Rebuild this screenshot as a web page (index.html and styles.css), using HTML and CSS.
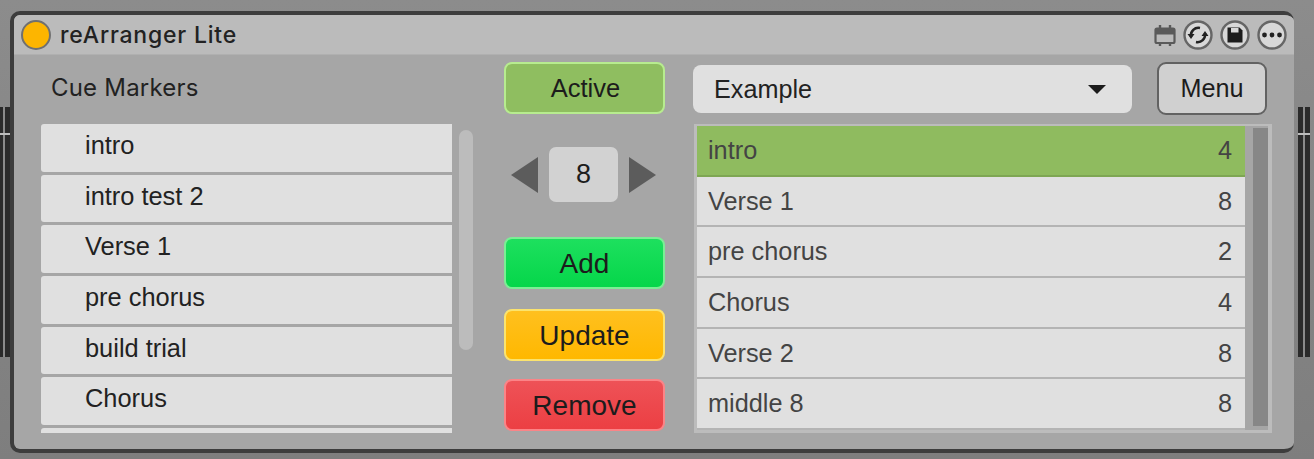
FILE: index.html
```html
<!doctype html>
<html lang="en">
  <head>
    <meta charset="UTF-8">
    <title>reArranger Lite</title>
    <link rel="stylesheet" href="styles.css">
  </head>
  <body>
    <div class="meter meter-left"></div>
    <div class="meter meter-right"></div>

    <div class="device">
      <div class="titlebar">
        <span class="led"></span>
        <span class="title">reArranger Lite</span>
        <div class="tools">
          <svg width="22" height="22" viewBox="0 0 22 22">
            <rect x="1.500" y="4.500" width="19" height="14.500" rx="1.500" fill="none" stroke="#5a5a5a" stroke-width="2.200"/>
            <rect x="1.500" y="4.500" width="19" height="6" fill="#5a5a5a"/>
            <path d="M6 1v4M16 1v4M6 18v4M16 18v4" stroke="#5a5a5a" stroke-width="2.400" fill="none"/>
          </svg>
          <svg width="30" height="30" viewBox="0 0 30 30">
            <circle cx="15" cy="15" r="13.500" fill="#d8d8d8" stroke="#666" stroke-width="2.400"/>
            <path d="M8 16.500a7.500 7.500 0 0 1 9-8.500" fill="none" stroke="#222" stroke-width="2.600"/>
            <path d="M22 13.500a7.500 7.500 0 0 1-9 8.500" fill="none" stroke="#222" stroke-width="2.600"/>
            <path d="M4.500 14h7l-3.500 5zM25.500 16h-7l3.500-5z" fill="#222"/>
          </svg>
          <svg width="30" height="30" viewBox="0 0 30 30">
            <circle cx="15" cy="15" r="13.500" fill="#d8d8d8" stroke="#666" stroke-width="2.400"/>
            <path d="M7.500 7.500h12l3 3v12h-15z" fill="#1c1c1c"/>
            <rect x="11" y="8" width="7.500" height="4.500" fill="#d8d8d8"/>
          </svg>
          <svg width="30" height="30" viewBox="0 0 30 30">
            <circle cx="15" cy="15" r="13.500" fill="#d8d8d8" stroke="#666" stroke-width="2.400"/>
            <circle cx="7.500" cy="15" r="2.400" fill="#222"/>
            <circle cx="15" cy="15" r="2.400" fill="#222"/>
            <circle cx="22.500" cy="15" r="2.400" fill="#222"/>
          </svg>
        </div>
      </div>

      <div class="content">
        <div class="cues">
          <h2 class="cues-title">Cue Markers</h2>
          <div class="cues-body">
            <ul class="cue-list">
              <li>intro</li>
              <li>intro test 2</li>
              <li>Verse 1</li>
              <li>pre chorus</li>
              <li>build trial</li>
              <li>Chorus</li>
              <li></li>
            </ul>
            <div class="cue-scroll"></div>
          </div>
        </div>

        <div class="controls">
          <button class="btn btn-active">Active</button>
          <div class="stepper">
            <span class="arrow arrow-left"></span>
            <span class="step-value">8</span>
            <span class="arrow arrow-right"></span>
          </div>
          <button class="btn btn-add">Add</button>
          <button class="btn btn-update">Update</button>
          <button class="btn btn-remove">Remove</button>
        </div>

        <div class="arrangement">
          <div class="arr-top">
            <div class="dropdown">
              <span>Example</span>
              <span class="caret"></span>
            </div>
            <button class="menu-btn">Menu</button>
          </div>
          <div class="arr-frame">
            <ul class="arr-list">
              <li class="selected"><span>intro</span><span>4</span></li>
              <li><span>Verse 1</span><span>8</span></li>
              <li><span>pre chorus</span><span>2</span></li>
              <li><span>Chorus</span><span>4</span></li>
              <li><span>Verse 2</span><span>8</span></li>
              <li><span>middle 8</span><span>8</span></li>
            </ul>
            <div class="arr-scroll"></div>
          </div>
        </div>
      </div>
    </div>
  </body>
</html>
```

FILE: styles.css
```css
* {
  box-sizing: border-box;
}

html, body {
  margin: 0;
  height: 459px;
  overflow: hidden;
}

body {
  position: relative;
  padding: 11px 20px 6px 10px;
  background: linear-gradient(#8c8c8c, #7e7e7e);
  font-family: "Liberation Sans", sans-serif;
  color: #1c1c1c;
}

ul {
  list-style: none;
  margin: 0;
  padding: 0;
}

button {
  font-family: inherit;
  color: inherit;
}

/* track meters peeking out behind the device */
.meter {
  position: absolute;
  top: 107px;
  height: 250px;
  width: 12px;
  background:
    linear-gradient(transparent 26px, #bdbdbd 26px, #bdbdbd 28px, transparent 28px),
    linear-gradient(90deg, #2a2a2a 5px, #8a8a8a 5px, #8a8a8a 7px, #2a2a2a 7px);
}

.meter-left {
  left: -2px;
}

.meter-right {
  left: 1298px;
}

.device {
  height: 442px;
  border: 4px solid #3d3d3d;
  border-right: 0;
  border-radius: 10px;
  background: #a6a6a6;
  overflow: hidden;
}

.titlebar {
  display: flex;
  align-items: center;
  height: 40px;
  padding: 0 7px 0 7px;
  background: #bbbbbb;
  border-bottom: 1px solid #b0b0b0;
}

.led {
  width: 30px;
  height: 30px;
  border-radius: 50%;
  background: #fdb500;
  border: 2px solid #707070;
}

.title {
  margin-left: 9px;
  font-family: Inter, sans-serif;
  font-size: 23px;
  font-weight: 500;
  letter-spacing: 0.8px;
  color: #222;
}

.tools {
  display: flex;
  align-items: center;
  gap: 7px;
  margin-left: auto;
}

.content {
  display: flex;
  height: 395px;
}

.cues {
  width: 459px;
  flex: none;
  padding: 0 0 0 27px;
}

.cues-title {
  height: 69px;
  margin: 0;
  padding: 18px 0 0 10px;
  font-family: Inter, sans-serif;
  font-size: 24px;
  font-weight: 400;
  letter-spacing: 0.2px;
  color: #222;
}

.cues-body {
  display: flex;
  height: 309px;
  overflow: hidden;
}

.cue-list {
  width: 411px;
  flex: none;
}

.cue-list li {
  height: 47.700px;
  margin-bottom: 3px;
  padding: 6px 0 0 44px;
  border-radius: 3px 0 0 3px;
  background: #e0e0e0;
  font-size: 25.400px;
  line-height: 30px;
  color: #222;
}

.cue-scroll {
  width: 14px;
  height: 220px;
  margin: 6px 0 0 7px;
  border-radius: 7px;
  background: #bcbcbc;
}

.controls {
  display: flex;
  flex-direction: column;
  flex: none;
  width: 161px;
  margin-left: 31px;
  padding-top: 7px;
}

.btn {
  display: block;
  width: 161px;
  height: 52px;
  padding: 1px 0 0;
  border: 2px solid;
  border-radius: 8px;
  font-size: 28px;
  color: #1c1c1c;
}

.btn-active {
  padding: 0 0 0 2px;
  background: #8fbe60;
  border-color: #b7ec8f;
  font-size: 25.500px;
}

.btn-add {
  margin-top: 35px;
  background: linear-gradient(#1de05e, #05d64a);
  border-color: #7bee95;
}

.btn-update {
  margin-top: 20px;
  background: linear-gradient(#ffc01f, #ffb800);
  border-color: #fbe36e;
}

.btn-remove {
  margin-top: 18px;
  background: linear-gradient(#ee5257, #ec3f43);
  border-color: #fb8487;
}

.stepper {
  display: flex;
  align-items: center;
  gap: 11px;
  height: 55px;
  margin-top: 33px;
  padding-left: 7px;
}

.arrow {
  width: 0;
  height: 0;
  border-top: 18px solid transparent;
  border-bottom: 18px solid transparent;
}

.arrow-left {
  border-right: 27px solid #5c5c5c;
}

.arrow-right {
  border-left: 27px solid #5c5c5c;
}

.step-value {
  width: 69px;
  height: 55px;
  border-radius: 7px;
  background: #d2d2d2;
  font-size: 27px;
  line-height: 55px;
  text-align: center;
}

.arrangement {
  flex: none;
  width: 579px;
  margin-left: 28px;
}

.arr-top {
  display: flex;
  align-items: flex-start;
  height: 69px;
  padding-top: 7px;
}

.dropdown {
  display: flex;
  align-items: center;
  justify-content: space-between;
  width: 439px;
  height: 48px;
  margin-top: 3px;
  padding: 0 26px 0 21px;
  border-radius: 8px;
  background: #e0e0e0;
  font-size: 25.200px;
  color: #222;
}

.caret {
  width: 0;
  height: 0;
  border-top: 9px solid #1c1c1c;
  border-left: 9px solid transparent;
  border-right: 9px solid transparent;
}

.menu-btn {
  width: 110px;
  height: 53px;
  margin-left: 25px;
  padding: 0;
  border: 2px solid #626262;
  border-radius: 9px;
  background: #d0d0d0;
  font-size: 25.200px;
}

.arr-frame {
  display: flex;
  width: 578px;
  height: 309px;
  margin-left: 1px;
  border: 3px solid #bcbcbc;
  border-top-width: 2px;
  border-right-width: 4px;
  overflow: hidden;
}

.arr-list {
  width: 548px;
  flex: none;
}

.arr-list li {
  display: flex;
  justify-content: space-between;
  align-items: center;
  height: 50.700px;
  padding: 0 13px 0 11px;
  background: #e0e0e0;
  border-bottom: 2px solid #b4b4b4;
  font-size: 25.300px;
  color: #444;
}

.arr-list li.selected {
  background: #8fbb5f;
  border-bottom-color: #7ea653;
}

.arr-scroll {
  width: 15px;
  margin: 2px 0 4px 8px;
  background: #878787;
}
```
